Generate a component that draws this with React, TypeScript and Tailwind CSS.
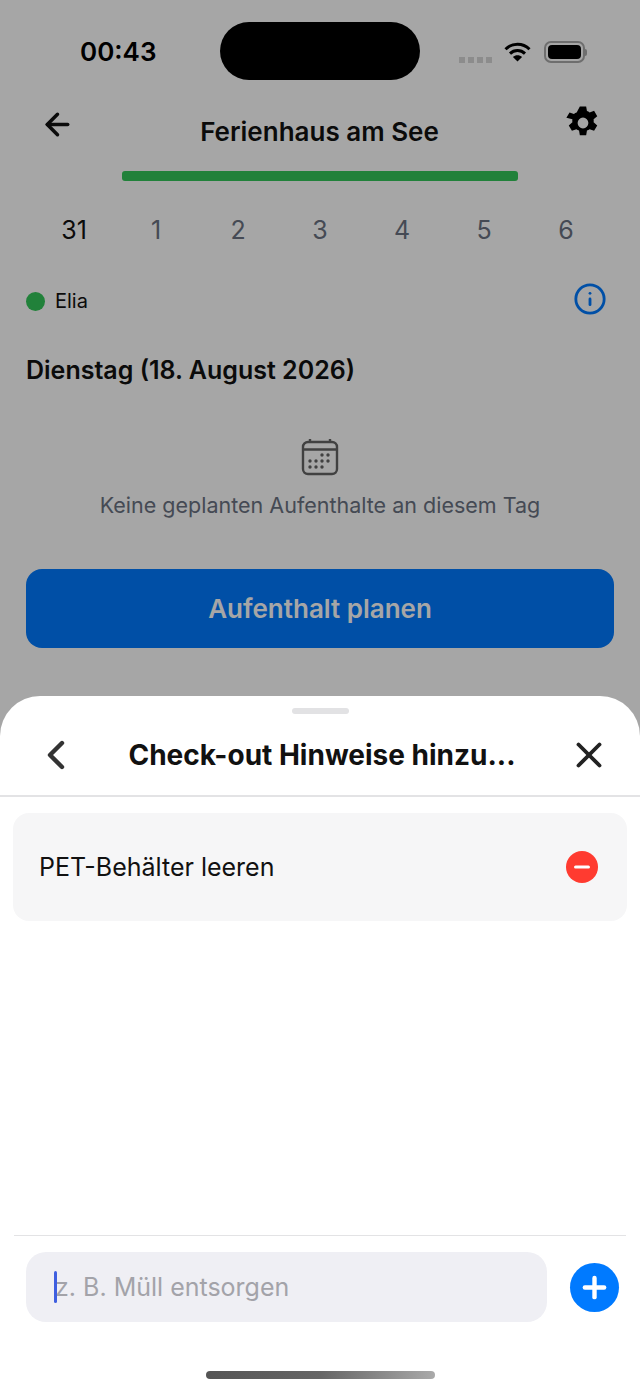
import React from 'react';
import { ArrowLeft, ChevronLeft, X, Plus, Minus, Info } from 'lucide-react';

const days = ['31', '1', '2', '3', '4', '5', '6'];

const Gear = () => (
    <svg width="38" height="38" viewBox="0 0 24 24" fill="#000">
        <path
            fillRule="evenodd"
            d="M10 1.5h4l.5 2.9c.6.2 1.2.5 1.7.9l2.8-1 2 3.4-2.3 1.9a7 7 0 0 1 0 2l2.3 1.9-2 3.4-2.8-1c-.5.4-1.1.7-1.7.9l-.5 2.9h-4l-.5-2.9c-.6-.2-1.2-.5-1.7-.9l-2.8 1-2-3.4 2.3-1.9a7 7 0 0 1 0-2L1.5 8.7l2-3.4 2.8 1c.5-.4 1.1-.7 1.7-.9zM12 8.6a3.4 3.4 0 1 0 0 6.8 3.4 3.4 0 0 0 0-6.8z"
        />
    </svg>
);

const Wifi = () => (
    <svg width="27" height="20" viewBox="0 0 27 20" fill="none" stroke="#000" strokeWidth="3">
        <path d="M1.5 7.2C8.2 .6 18.8 .6 25.5 7.2" />
        <path d="M6 11.6c4.2-4 10.8-4 15 0" />
        <path d="M13.5 19.5l-4.6-4.6c2.5-2.2 6.7-2.2 9.2 0z" fill="#000" stroke="none" />
    </svg>
);

const CalendarIcon = () => (
    <svg width="38" height="38" viewBox="0 0 38 38" fill="none" stroke="#000" strokeWidth="2.4" className="opacity-60">
        <rect x="2" y="4" width="34" height="32" rx="5" />
        <path d="M2 11.5h34M9 1v3M29 1v3" />
        <g fill="#000" stroke="none">
            <circle cx="21" cy="17" r="1.7" />
            <circle cx="27" cy="17" r="1.7" />
            <circle cx="9" cy="23" r="1.7" />
            <circle cx="15" cy="23" r="1.7" />
            <circle cx="21" cy="23" r="1.7" />
            <circle cx="27" cy="23" r="1.7" />
            <circle cx="9" cy="29" r="1.7" />
            <circle cx="15" cy="29" r="1.7" />
            <circle cx="21" cy="29" r="1.7" />
        </g>
    </svg>
);

const App: React.FC = () => {
    return (
        <div className="relative w-[640px] h-[1391px] overflow-hidden bg-white font-['Inter',sans-serif] text-[#111]">
            {/* page behind the sheet */}
            <div className="flex flex-col">
                <div className="flex items-center justify-between h-[104px] pl-[43px] pr-[20px] pt-[4px]"></div>
                <div className="flex items-start justify-between h-[62px] pl-[40px] pr-[38px]">
                    <ArrowLeft size={35} strokeWidth={2.4} className="mt-[3px]" />
                    <h1 className="mt-[11px] text-[26px] leading-[34px] font-semibold">Ferienhaus am See</h1>
                    <Gear />
                </div>
                <div className="mx-[122px] mt-[5px] h-[10px] rounded-[3px] bg-[#34c759]"></div>
                <div className="flex justify-between mt-[33px] pl-[33px] pr-[33px] text-[25px] leading-[32px] text-gray-500">
                    {days.map((d, i) => (
                        <span key={d} className={i === 0 ? 'w-[82px] text-center text-[#111]' : 'w-[82px] text-center'}>
                            {d}
                        </span>
                    ))}
                </div>
                <div className="flex items-center justify-between mt-[40px] pl-[26px] pr-[33px]">
                    <div className="flex items-center gap-[10px]">
                        <span className="w-[19px] h-[19px] rounded-full bg-[#34c759]"></span>
                        <span className="text-[20px] leading-[28px]">Elia</span>
                    </div>
                    <Info size={34} strokeWidth={2} className="text-[#007aff] -mt-[4px]" />
                </div>
                <h2 className="mt-[38px] pl-[26px] text-[25px] leading-[32px] font-semibold">Dienstag (18. August 2026)</h2>
                <div className="flex flex-col items-center mt-[52px]">
                    <CalendarIcon />
                    <p className="mt-[14px] text-[21.5px] leading-[30px] text-gray-500">Keine geplanten Aufenthalte an diesem Tag</p>
                </div>
                <button className="mx-[26px] mt-[49px] h-[79px] rounded-[16px] bg-[#007aff] text-white text-[26px] font-semibold">
                    Aufenthalt planen
                </button>
            </div>

            {/* dim layer */}
            <div className="absolute inset-0 bg-black/35"></div>

            {/* status bar */}
            <span className="absolute left-[80px] top-[35px] text-[26px] leading-[34px] font-semibold text-black">00:43</span>
            <div className="absolute left-[220px] top-[22px] w-[200px] h-[58px] rounded-full bg-black"></div>
            <div className="absolute left-[459px] top-[41px] flex items-center">
                <div className="flex gap-[3px] mt-[15px] mr-[12px]">
                    <span className="w-[6px] h-[6px] bg-[#8c8c8c]"></span>
                    <span className="w-[6px] h-[6px] bg-[#8c8c8c]"></span>
                    <span className="w-[6px] h-[6px] bg-[#8c8c8c]"></span>
                    <span className="w-[6px] h-[6px] bg-[#8c8c8c]"></span>
                </div>
                <Wifi />
                <div className="flex items-center ml-[13px]">
                    <div className="w-[41px] h-[22px] rounded-[7px] border-2 border-[#6e6e6e] p-[2px]">
                        <div className="w-full h-full rounded-[4px] bg-black"></div>
                    </div>
                    <span className="w-[2px] h-[7px] rounded-r-full bg-[#6e6e6e]"></span>
                </div>
            </div>

            {/* bottom sheet */}
            <div className="absolute left-0 right-0 bottom-0 top-[696px] flex flex-col rounded-t-[40px] bg-white">
                <div className="mx-auto mt-[12px] w-[57px] h-[6px] rounded-full bg-[#e2e2e4]"></div>
                <div className="flex items-center justify-between h-[83px] pl-[32px] pr-[30px] border-b-2 border-[#e3e3e5]">
                    <ChevronLeft size={48} strokeWidth={2.2} className="text-[#333]" />
                    <h3 className="text-[28px] leading-[36px] font-bold -ml-[4px]">Check-out Hinweise hinzu...</h3>
                    <X size={42} strokeWidth={2.2} className="text-[#222]" />
                </div>
                <div className="flex items-center justify-between mx-[13px] mt-[16px] h-[108px] pl-[26px] pr-[29px] rounded-[16px] bg-[#f6f6f7]">
                    <span className="text-[25px] leading-[32px]">PET-Behälter leeren</span>
                    <span className="flex items-center justify-center w-[32px] h-[32px] rounded-full bg-[#ff3b30]">
                        <Minus size={22} strokeWidth={3.4} className="text-white" />
                    </span>
                </div>
                <div className="flex-1"></div>
                <div className="flex items-center mx-[14px] h-[87px] pl-[12px] pr-[7px] pt-[16px] border-t border-[#e3e3e5]">
                    <div className="relative flex items-center flex-1 h-[70px] pl-[29px] rounded-[20px] bg-[#efeff4]">
                        <span className="text-[25px] leading-[32px] text-[#a3a3a9]">z. B. Müll entsorgen</span>
                        <span className="absolute left-[28px] top-[19px] w-[3px] h-[32px] rounded-full bg-[#3f5fe0]"></span>
                    </div>
                    <span className="flex items-center justify-center ml-[23px] w-[49px] h-[49px] rounded-full bg-[#007aff]">
                        <Plus size={33} strokeWidth={3.2} className="text-white" />
                    </span>
                </div>
                <div className="mx-auto mt-[49px] mb-[12px] w-[229px] h-[8px] rounded-full bg-gradient-to-r from-[#555] via-[#666] to-[#aaa]"></div>
            </div>
        </div>
    );
};

export default App;
